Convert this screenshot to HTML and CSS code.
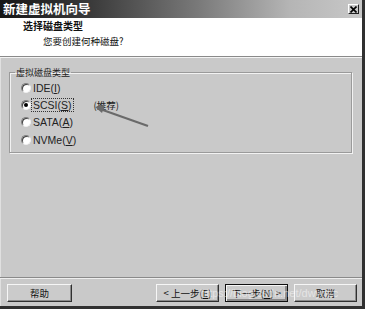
FILE: index.html
```html
<!DOCTYPE html>
<html lang="zh">
<head>
<meta charset="utf-8">
<link rel="stylesheet" href="styles.css">
</head>
<body>
<div class="window">
  <div class="titlebar">
    <span class="title">新建虚拟机向导</span>
    <span class="close">
      <svg width="7" height="7" viewBox="0 0 7 7"><path d="M0.5 0.5 L6.5 6.5 M6.5 0.5 L0.5 6.5" stroke="#000" stroke-width="1.6"/></svg>
    </span>
  </div>
  <div class="header">
    <div class="h-title">选择磁盘类型</div>
    <div class="h-sub">您要创建何种磁盘?</div>
  </div>
  <div class="content">
    <fieldset class="group">
      <legend class="legend">虚拟磁盘类型</legend>
      <div class="opt"><span class="radio"></span><span class="lbl">IDE(<u>I</u>)</span></div>
      <div class="opt"><span class="radio on"></span><span class="lbl focus">SCSI(<u>S</u>)</span><span class="rec">(推荐)</span></div>
      <div class="opt"><span class="radio"></span><span class="lbl">SATA(<u>A</u>)</span></div>
      <div class="opt"><span class="radio"></span><span class="lbl">NVMe(<u>V</u>)</span></div>
    </fieldset>
  </div>
  <div class="footer">
    <button class="btn">帮助</button>
    <div class="spacer"></div>
    <button class="btn">&lt; 上一步(<u>E</u>)</button>
    <button class="btn def">下一步(<u>N</u>) &gt;</button>
    <button class="btn">取消</button>
  </div>
  <svg class="arrow" width="365" height="309" viewBox="0 0 365 309">
    <path d="M148 126 L100 109" stroke="#6a6a6a" stroke-width="2.2" fill="none"/>
    <path d="M95 107 L105 104.5 L102 113 Z" fill="#6a6a6a"/>
  </svg>
  <div class="wm">https://blog.csdn.net/dwyhzc</div>
</div>
</body>
</html>
```
FILE: styles.css
```css
* { box-sizing: border-box; }
html, body { margin: 0; padding: 0; }
body {
  width: 365px;
  height: 309px;
  overflow: hidden;
  font-family: "Liberation Sans", "Noto Sans CJK SC", sans-serif;
  background: #c8c8c8;
}
.window {
  position: relative;
  width: 365px;
  height: 309px;
  display: flex;
  flex-direction: column;
  background: #c9c9c9;
  border-right: 3px solid #303030;
  border-bottom: 3px solid #303030;
  box-shadow: inset 1px 0 0 #e0e0e0;
}
.titlebar {
  height: 18px;
  background: linear-gradient(to right, #151515 0%, #3a3a3a 25%, #7a7a7a 55%, #b5b5b5 80%, #c8c8c8 100%);
  display: flex;
  align-items: center;
  justify-content: space-between;
  padding: 0 3px 0 3px;
}
.title {
  color: #fff;
  font-family: "Noto Sans CJK SC", sans-serif;
  font-weight: 700;
  font-size: 12.5px;
  letter-spacing: 0px;
  line-height: 18px;
}
.close {
  width: 11px;
  height: 10px;
  background: #c8c8c8;
  border-top: 1px solid #fff;
  border-left: 1px solid #fff;
  border-right: 1px solid #202020;
  border-bottom: 1px solid #202020;
  display: flex;
  align-items: center;
  justify-content: center;
}
.header {
  height: 39px;
  background: #fff;
  border-bottom: 1px solid #8a8a8a;
  box-shadow: 0 1px 0 #f4f4f4;
  padding: 1px 0 0 23px;
  font-family: "Noto Sans CJK SC", sans-serif;
  color: #111;
}
.h-title {
  font-size: 10px;
  font-weight: 700;
  line-height: 13px;
}
.h-sub {
  font-size: 9.5px;
  line-height: 13px;
  margin-top: 3px;
  padding-left: 20px;
}
.content {
  flex: 1;
  padding: 10px 10px 0 9px;
}
.group {
  margin: 0;
  padding: 1px 0 8px 11px;
  height: 86px;
  border: 1px solid #9a9a9a;
  box-shadow: 1px 1px 0 #f2f2f2, inset 1px 1px 0 #f2f2f2;
}
.legend {
  font-family: "Noto Sans CJK SC", sans-serif;
  font-size: 9px;
  color: #222;
  padding: 0 1px;
  margin-left: -6px;
  line-height: 11px;
}
.opt {
  height: 17.3px;
  display: flex;
  align-items: center;
  font-size: 10.5px;
  color: #222;
}
.radio {
  width: 10px;
  height: 10px;
  border-radius: 50%;
  background: #fff;
  border: 1px solid;
  border-color: #808080 #f0f0f0 #f0f0f0 #808080;
  box-shadow: inset 1px 1px 0 #404040;
  margin-right: 1px;
  position: relative;
}
.radio.on::after {
  content: "";
  position: absolute;
  left: 2px;
  top: 2px;
  width: 4px;
  height: 4px;
  border-radius: 50%;
  background: #000;
}
.lbl { padding: 0 1px; line-height: 12px; }
.lbl u { text-decoration: underline; }
.focus { outline: 1px dotted #333; }
.rec {
  margin-left: 21px;
  font-family: "Noto Sans CJK SC", sans-serif;
  font-size: 9.5px;
}
.footer {
  height: 29px;
  display: flex;
  align-items: flex-start;
  padding: 6px 5px 0 7px;
  border-top: 1px solid #8a8a8a;
  box-shadow: inset 0 1px 0 #eeeeee;
  gap: 6px;
}
.spacer { flex: 1; }
.btn {
  width: 63px;
  height: 18px;
  padding: 0;
  margin: 0;
  background: #cbcbcb;
  font-family: "Noto Sans CJK SC", sans-serif;
  font-size: 9.5px;
  color: #111;
  border-top: 1px solid #f6f6f6;
  border-left: 1px solid #f6f6f6;
  border-right: 1px solid #303030;
  border-bottom: 1px solid #303030;
  box-shadow: inset -1px -1px 0 #8a8a8a;
  line-height: 14px;
}
.btn:first-child { width: 65px; }
.btn.def {
  border: 1px solid #101010;
  box-shadow: inset 1px 1px 0 #f6f6f6, inset -2px -2px 0 #8a8a8a;
}
.arrow {
  position: absolute;
  left: 0;
  top: 0;
  pointer-events: none;
}
.wm {
  position: absolute;
  left: 200px;
  top: 287px;
  font-family: "Liberation Sans", sans-serif;
  font-size: 11px;
  color: rgba(255,255,255,0.5);
  pointer-events: none;
}
```
